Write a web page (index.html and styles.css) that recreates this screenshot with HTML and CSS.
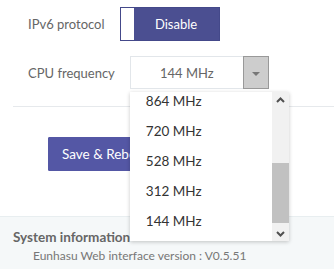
FILE: index.html
```html
<!DOCTYPE html>
<html>
<head>
<meta charset="utf-8">
<link rel="stylesheet" href="styles.css">
</head>
<body>
<div class="page">
  <section class="settings">
    <div class="row row-ipv6">
      <span class="label">IPv6 protocol</span>
      <div class="toggle"><span class="knob"></span><span class="state">Disable</span></div>
    </div>
    <div class="row row-cpu">
      <span class="label">CPU frequency</span>
      <div class="select">
        <span class="value">144 MHz</span>
        <span class="caret"><span class="tri"></span></span>
        <div class="menu">
          <ul class="options">
            <li>864 MHz</li>
            <li>720 MHz</li>
            <li>528 MHz</li>
            <li>312 MHz</li>
            <li>144 MHz</li>
          </ul>
          <div class="scrollbar">
            <span class="sb-btn"><svg width="9" height="6" viewBox="0 0 9 6"><path d="M1 5 L4.5 1.5 L8 5" fill="none" stroke="#505050" stroke-width="2"/></svg></span>
            <span class="sb-track"><span class="sb-thumb"></span></span>
            <span class="sb-btn"><svg width="9" height="6" viewBox="0 0 9 6"><path d="M1 1 L4.5 4.5 L8 1" fill="none" stroke="#505050" stroke-width="2"/></svg></span>
          </div>
        </div>
      </div>
    </div>
    <div class="divider"></div>
    <div class="actions">
      <button class="btn btn-primary">Save &amp; Reboot</button>
      <button class="btn btn-default">Cancel</button>
    </div>
  </section>
  <footer class="footer">
    <div class="footer-title">System information</div>
    <div class="footer-text">Eunhasu Web interface version : V0.5.51</div>
  </footer>
</div>
</body>
</html>
```
FILE: styles.css
```css
html, body {
  margin: 0;
  padding: 0;
  background: #ffffff;
}
body {
  font-family: Lato, "Open Sans", sans-serif;
  font-size: 13px;
  color: #333;
  width: 334px;
  height: 269px;
  overflow: hidden;
}
.page {
  display: flex;
  flex-direction: column;
  height: 269px;
}
.settings {
  padding: 7px 0 0 13px;
  height: 209px;
}
.row {
  display: flex;
  align-items: center;
  gap: 15px;
  padding-left: 15px;
}
.label {
  color: #666;
  font-size: 13px;
}
.row-ipv6 {
  height: 34px;
}
.toggle {
  box-sizing: border-box;
  width: 100px;
  height: 34px;
  border: 1px solid #44498a;
  display: flex;
  background: #4b4f91;
}
.knob {
  width: 13px;
  background: #fff;
  flex: none;
}
.state {
  flex: 1;
  display: flex;
  align-items: center;
  justify-content: center;
  color: #fff;
  font-size: 13px;
}
.row-cpu {
  margin-top: 15px;
  height: 33px;
}
.select {
  position: relative;
  box-sizing: border-box;
  width: 139px;
  height: 33px;
  border: 1px solid #e2e6ea;
  display: flex;
}
.value {
  flex: 1;
  display: flex;
  align-items: center;
  justify-content: center;
  color: #666;
  font-size: 13px;
}
.caret {
  box-sizing: border-box;
  width: 26px;
  margin: -1px -1px -1px 0;
  background: #cdcdcd;
  border: 1px solid #999;
  display: flex;
  align-items: center;
  justify-content: center;
}
.tri {
  width: 0;
  height: 0;
  border-left: 4px solid transparent;
  border-right: 4px solid transparent;
  border-top: 4px solid #777;
  margin-top: 2px;
}
.menu {
  position: absolute;
  left: -1px;
  top: 35px;
  width: 159px;
  height: 149px;
  background: #fff;
  box-shadow: 0 1px 4px rgba(0,0,0,0.22);
  display: flex;
  overflow: hidden;
  z-index: 5;
}
.options {
  list-style: none;
  margin: -6px 0 0 0;
  padding: 0;
  flex: 1;
}
.options li {
  height: 30px;
  line-height: 30px;
  padding-left: 16px;
  color: #333;
  font-size: 13.5px;
}
.scrollbar {
  width: 17px;
  background: #f1f1f1;
  display: flex;
  flex-direction: column;
}
.sb-btn {
  height: 15px;
  display: flex;
  align-items: center;
  justify-content: center;
}
.sb-track {
  flex: 1;
  display: flex;
  flex-direction: column;
  padding-top: 56px;
  padding-bottom: 3px;
}
.sb-thumb {
  flex: 1;
  background: #c1c1c1;
}
.divider {
  height: 1px;
  background: #e6e9ec;
  margin-top: 17px;
}
.actions {
  display: flex;
  gap: 10px;
  padding-left: 35px;
  margin-top: 30px;
}
.btn {
  box-sizing: border-box;
  height: 34px;
  font-family: inherit;
  font-size: 13.5px;
  padding: 0 13px;
  border-radius: 1px;
}
.btn-primary {
  background: #5457a5;
  color: #fff;
  border: 1px solid #5457a5;
  width: 130px;
  text-align: left;
}
.btn-default {
  background: #fff;
  border: 1px solid #ccd4de;
  color: #333;
  width: 97px;
}
.footer {
  flex: 1;
  background: #f5f8f9;
  border-top: 1px solid #e8eef0;
  padding: 11px 0 0 13px;
}
.footer-title {
  font-weight: bold;
  color: #666;
  font-size: 13.5px;
  line-height: 18px;
}
.footer-text {
  color: #777;
  font-size: 12px;
  line-height: 18px;
  padding-left: 20px;
  margin-top: 1px;
}
```
